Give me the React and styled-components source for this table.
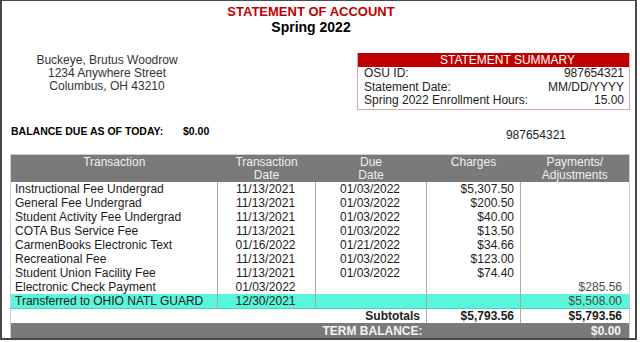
import React from "react";
import styled, { createGlobalStyle } from "styled-components";

const rows = [
    { name: "Instructional Fee Undergrad", date: "11/13/2021", due: "01/03/2022", charge: "$5,307.50" },
    { name: "General Fee Undergrad", date: "11/13/2021", due: "01/03/2022", charge: "$200.50" },
    { name: "Student Activity Fee Undergrad", date: "11/13/2021", due: "01/03/2022", charge: "$40.00" },
    { name: "COTA Bus Service Fee", date: "11/13/2021", due: "01/03/2022", charge: "$13.50" },
    { name: "CarmenBooks Electronic Text", date: "01/16/2022", due: "01/21/2022", charge: "$34.66" },
    { name: "Recreational Fee", date: "11/13/2021", due: "01/03/2022", charge: "$123.00" },
    { name: "Student Union Facility Fee", date: "11/13/2021", due: "01/03/2022", charge: "$74.40" },
    { name: "Electronic Check Payment", date: "01/03/2022", due: "", charge: "", payment: "$285.56" },
    { name: "Transferred to OHIO NATL GUARD", date: "12/30/2021", due: "", charge: "", payment: "$5,508.00", highlight: true },
];

const App = () => {
    return (
        <>
            <GlobalStyle />
            <Frame>
                <TitleBlock>
                    <Title>STATEMENT OF ACCOUNT</Title>
                    <Term>Spring 2022</Term>
                </TitleBlock>
                <TopRow>
                    <Address>
                        <div>Buckeye, Brutus Woodrow</div>
                        <div>1234 Anywhere Street</div>
                        <div>Columbus, OH 43210</div>
                    </Address>
                    <Summary>
                        <SummaryHead>STATEMENT SUMMARY</SummaryHead>
                        <SummaryRow>
                            <span>OSU ID:</span>
                            <span>987654321</span>
                        </SummaryRow>
                        <SummaryRow>
                            <span>Statement Date:</span>
                            <span>MM/DD/YYYY</span>
                        </SummaryRow>
                        <SummaryRow>
                            <span>Spring 2022 Enrollment Hours:</span>
                            <span>15.00</span>
                        </SummaryRow>
                    </Summary>
                </TopRow>
                <BalanceRow>
                    <BalanceLabel>BALANCE DUE AS OF TODAY:</BalanceLabel>
                    <BalanceLabel>$0.00</BalanceLabel>
                    <StudentId>987654321</StudentId>
                </BalanceRow>
                <Table>
                    <colgroup>
                        <col style={{ width: 207 }} />
                        <col style={{ width: 98 }} />
                        <col style={{ width: 111 }} />
                        <col style={{ width: 94 }} />
                        <col style={{ width: 109 }} />
                    </colgroup>
                    <thead>
                        <tr>
                            <Th>Transaction</Th>
                            <Th>Transaction<br />Date</Th>
                            <Th>Due<br />Date</Th>
                            <Th>Charges</Th>
                            <Th>Payments/<br />Adjustments</Th>
                        </tr>
                    </thead>
                    <tbody>
                        {rows.map((r) => (
                            <Row key={r.name} $highlight={r.highlight}>
                                <Td>{r.name}</Td>
                                <Td $align="center" $line>{r.date}</Td>
                                <Td $align="center" $line>{r.due}</Td>
                                <Td $align="right" $line>{r.charge}</Td>
                                <Td $align="right" $line $muted>{r.payment}</Td>
                            </Row>
                        ))}
                        <Row>
                            <Td colSpan={3} $align="right" $bold>Subtotals</Td>
                            <Td $align="right" $line $bold>$5,793.56</Td>
                            <Td $align="right" $line $bold>$5,793.56</Td>
                        </Row>
                        <TotalRow>
                            <td colSpan={2} />
                            <TotalCell colSpan={2}>TERM BALANCE:</TotalCell>
                            <TotalCell $align="right">$0.00</TotalCell>
                        </TotalRow>
                    </tbody>
                </Table>
            </Frame>
        </>
    );
};

export default App;

const GlobalStyle = createGlobalStyle`
    body {
        margin: 0;
        background: #fff;
        font-family: "Liberation Sans", Arial, sans-serif;
        color: #1c1c1c;
    }
`;

const Frame = styled.div`
    width: 637px;
    height: 340px;
    box-sizing: border-box;
    border: 2px solid #484848;
    border-top-width: 1px;
    overflow: hidden;
`;

const TitleBlock = styled.div`
    text-align: center;
    padding: 3px 15px 0 0;
`;

const Title = styled.div`
    color: #c00000;
    font-size: 13px;
    font-weight: bold;
    line-height: 15px;
`;

const Term = styled.div`
    color: #000;
    font-size: 14px;
    font-weight: bold;
    line-height: 17px;
`;

const TopRow = styled.div`
    display: flex;
    justify-content: space-between;
    align-items: flex-start;
    margin-top: 17px;
`;

const Address = styled.div`
    width: 194px;
    margin-left: 8px;
    padding-top: 1px;
    text-align: center;
    font-size: 12px;
    line-height: 13px;
    color: #333;
`;

const Summary = styled.div`
    width: 273px;
    margin-right: 5px;
    box-sizing: border-box;
    border: 1px solid #d9a9a9;
    border-top: none;
    padding-bottom: 1px;
`;

const SummaryHead = styled.div`
    background: #c00000;
    color: #fff;
    font-size: 12px;
    line-height: 14px;
    text-align: center;
    padding-left: 28px;
`;

const SummaryRow = styled.div`
    display: flex;
    justify-content: space-between;
    padding: 0 5px 0 6px;
    font-size: 12px;
    line-height: 13.5px;
    color: #222;
`;

const BalanceRow = styled.div`
    display: flex;
    align-items: flex-start;
    margin-top: 14px;
    padding-left: 9px;
    height: 18px;
`;

const BalanceLabel = styled.span`
    font-size: 10.5px;
    font-weight: bold;
    line-height: 14px;
    color: #000;
    &:first-child {
        width: 172px;
    }
`;

const StudentId = styled.span`
    margin-left: auto;
    margin-right: 69px;
    padding-top: 4px;
    font-size: 12px;
    line-height: 14px;
    color: #222;
`;

const Table = styled.table`
    margin: 12px 0 0 8px;
    width: 619px;
    table-layout: fixed;
    border-collapse: collapse;
    border: 1px solid #cdcdcd;
    font-size: 12px;
`;

const Th = styled.th`
    background: #7a7a7a;
    color: #efefef;
    font-weight: normal;
    height: 28px;
    padding: 1px 0 0;
    line-height: 13px;
    vertical-align: top;
    text-align: center;
    box-sizing: border-box;
`;

const Row = styled.tr`
    background: ${(p) => (p.$highlight ? "#5af6db" : "#fff")};
    border-bottom: ${(p) => (p.$highlight ? "1px solid #3fd9be" : "none")};
`;

const Td = styled.td`
    height: 14px;
    padding: 0 6px 0 4px;
    line-height: 14px;
    white-space: nowrap;
    overflow: hidden;
    text-align: ${(p) => p.$align || "left"};
    font-weight: ${(p) => (p.$bold ? "bold" : "normal")};
    color: ${(p) => (p.$muted && !p.$bold ? "#4a4a4a" : "#1c1c1c")};
    border-left: ${(p) => (p.$line ? "1px solid #a8a8a8" : "none")};
    &:last-child {
        padding-right: 7px;
    }
`;

const TotalRow = styled.tr`
    background: #7a7a7a;
`;

const TotalCell = styled.td`
    height: 16px;
    padding: 0 8px 0 7px;
    line-height: 16px;
    color: #f4f4f4;
    font-weight: bold;
    text-align: ${(p) => p.$align || "left"};
`;
